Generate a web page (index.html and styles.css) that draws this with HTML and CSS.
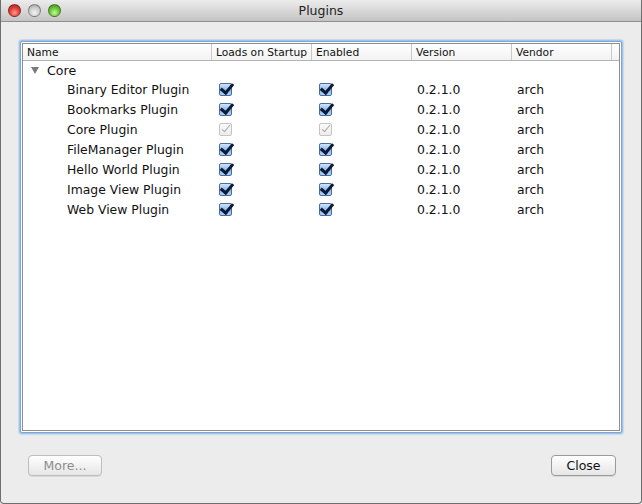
FILE: index.html
```html
<!DOCTYPE html>
<html>
<head>
<meta charset="utf-8">
<link rel="stylesheet" href="styles.css">
</head>
<body>
<div class="window">
  <div class="titlebar">
    <div class="lights">
      <span class="light red"></span>
      <span class="light gray"></span>
      <span class="light green"></span>
    </div>
    <div class="title">Plugins</div>
  </div>
  <div class="content">
    <div class="tableframe">
      <div class="table">
        <div class="header">
          <div class="hcell c-name">Name</div>
          <div class="hcell c-load">Loads on Startup</div>
          <div class="hcell c-en">Enabled</div>
          <div class="hcell c-ver">Version</div>
          <div class="hcell c-ven">Vendor</div>
          <div class="hcell c-rest"></div>
        </div>
        <div class="row group">
          <div class="cell c-name"><span class="tri"></span>Core</div>
        </div>
        <div class="row">
          <div class="cell c-name indent">Binary Editor Plugin</div>
          <div class="cell c-load"><span class="cb on"></span></div>
          <div class="cell c-en"><span class="cb on"></span></div>
          <div class="cell c-ver">0.2.1.0</div>
          <div class="cell c-ven">arch</div>
        </div>
        <div class="row">
          <div class="cell c-name indent">Bookmarks Plugin</div>
          <div class="cell c-load"><span class="cb on"></span></div>
          <div class="cell c-en"><span class="cb on"></span></div>
          <div class="cell c-ver">0.2.1.0</div>
          <div class="cell c-ven">arch</div>
        </div>
        <div class="row">
          <div class="cell c-name indent">Core Plugin</div>
          <div class="cell c-load"><span class="cb dis"></span></div>
          <div class="cell c-en"><span class="cb dis"></span></div>
          <div class="cell c-ver">0.2.1.0</div>
          <div class="cell c-ven">arch</div>
        </div>
        <div class="row">
          <div class="cell c-name indent">FileManager Plugin</div>
          <div class="cell c-load"><span class="cb on"></span></div>
          <div class="cell c-en"><span class="cb on"></span></div>
          <div class="cell c-ver">0.2.1.0</div>
          <div class="cell c-ven">arch</div>
        </div>
        <div class="row">
          <div class="cell c-name indent">Hello World Plugin</div>
          <div class="cell c-load"><span class="cb on"></span></div>
          <div class="cell c-en"><span class="cb on"></span></div>
          <div class="cell c-ver">0.2.1.0</div>
          <div class="cell c-ven">arch</div>
        </div>
        <div class="row">
          <div class="cell c-name indent">Image View Plugin</div>
          <div class="cell c-load"><span class="cb on"></span></div>
          <div class="cell c-en"><span class="cb on"></span></div>
          <div class="cell c-ver">0.2.1.0</div>
          <div class="cell c-ven">arch</div>
        </div>
        <div class="row">
          <div class="cell c-name indent">Web View Plugin</div>
          <div class="cell c-load"><span class="cb on"></span></div>
          <div class="cell c-en"><span class="cb on"></span></div>
          <div class="cell c-ver">0.2.1.0</div>
          <div class="cell c-ven">arch</div>
        </div>
      </div>
    </div>
    <div class="buttons">
      <button class="btn disabled">More...</button>
      <button class="btn close">Close</button>
    </div>
  </div>
</div>
</body>
</html>
```
FILE: styles.css
```css
html, body {
  margin: 0;
  padding: 0;
  background: #ececec;
}
.window {
  width: 642px;
  height: 504px;
  box-sizing: border-box;
  border: 1px solid #6e6e6e;
  border-top: none;
  border-radius: 0 0 4px 4px;
  background: #ececec;
  font-family: "DejaVu Sans", sans-serif;
  display: flex;
  flex-direction: column;
  overflow: hidden;
}
.titlebar {
  height: 22px;
  box-sizing: border-box;
  background: linear-gradient(#ececec, #d8d8d8 50%, #c4c4c4);
  border-bottom: 1px solid #8f8f8f;
  display: flex;
  align-items: center;
  position: relative;
}
.lights {
  display: flex;
  gap: 7px;
  padding-left: 7px;
}
.light {
  width: 13px;
  height: 13px;
  border-radius: 50%;
  box-sizing: border-box;
  border: 1px solid rgba(0,0,0,0.35);
}
.light.red { background: radial-gradient(circle at 50% 70%, #ff9c8f, #e0403a 50%, #a81c16); }
.light.gray { background: radial-gradient(circle at 50% 70%, #f2f2f2, #cfcfcf 50%, #9a9a9a); }
.light.green { background: radial-gradient(circle at 50% 70%, #c8f79a, #6cc338 50%, #3d8a16); }
.title {
  position: absolute;
  left: 0;
  right: 0;
  text-align: center;
  font-size: 12.5px;
  color: #222;
  top: 3px;
}
.content {
  flex: 1;
  display: flex;
  flex-direction: column;
  padding: 19px 19px 0 19px;
}
.tableframe {
  height: 392px;
  box-sizing: border-box;
  border: 1px solid #7ba7d7;
  box-shadow: 0 0 0 1px #a4c2e4, 0 0 1px 2px #c6d9ef;
  border-radius: 2px;
  background: #fff;
  padding: 1px;
}
.table {
  border: 1px solid #8e8e8e;
  height: 100%;
  box-sizing: border-box;
  background: #fff;
}
.header {
  display: flex;
  height: 17px;
  box-sizing: border-box;
  border-bottom: 1px solid #b4b4b4;
  background: linear-gradient(#fff, #f2f2f2);
  font-size: 10.7px;
  color: #111;
}
.hcell {
  box-sizing: border-box;
  padding-left: 4px;
  padding-top: 2px;
  line-height: 14px;
  border-right: 1px solid #c8c8c8;
  white-space: nowrap;
  overflow: hidden;
}
.c-name { width: 189px; }
.c-load { width: 100px; }
.c-en { width: 100px; }
.c-ver { width: 100px; }
.c-ven { width: 100px; }
.c-rest { flex: 1; border-right: none; }
.row {
  display: flex;
  height: 20px;
  align-items: center;
  font-size: 12.4px;
  color: #111;
}
.row.group { height: 18px; font-size: 12.6px; }
.cell {
  box-sizing: border-box;
  padding-left: 5px;
  white-space: nowrap;
  display: flex;
  align-items: center;
}
.cell.indent { padding-left: 44px; }
.tri {
  width: 0;
  height: 0;
  border-left: 4px solid transparent;
  border-right: 4px solid transparent;
  border-top: 7px solid #7a7a7a;
  margin: 0 8px 0 3px;
}
.c-load.cell, .c-en.cell { padding-left: 7px; }
.cb {
  width: 13px;
  height: 13px;
  box-sizing: border-box;
  border: 1px solid #4a6d9c;
  border-radius: 2px;
  background: linear-gradient(#cfe3fb, #8ab8ef 55%, #a9d0fb);
  position: relative;
}
.cb::after {
  content: "";
  position: absolute;
  left: 3px;
  top: -3px;
  width: 5px;
  height: 10px;
  border-right: 3px solid #0d1a33;
  border-bottom: 3px solid #0d1a33;
  transform: rotate(40deg);
}
.cb.dis {
  border-color: #c4c4c4;
  background: linear-gradient(#fafafa, #ececec);
}
.cb.dis::after {
  border-right: 1.5px solid #a8a8a8;
  border-bottom: 1.5px solid #a8a8a8;
  left: 4px;
  top: -1px;
  width: 3px;
  height: 8px;
}
.buttons {
  display: flex;
  justify-content: space-between;
  padding: 22px 6px 0 8px;
}
.btn {
  font-family: "DejaVu Sans", sans-serif;
  font-size: 12.5px;
  height: 21px;
  padding: 0;
  border: 1px solid #9a9a9a;
  border-radius: 4px;
  background: linear-gradient(#ffffff, #f2f2f2 50%, #e6e6e6);
  color: #111;
  box-shadow: 0 1px 0 rgba(0,0,0,0.08);
}
.btn.disabled {
  width: 74px;
  color: #8c8c8c;
  border-color: #bdbdbd;
}
.btn.close {
  width: 65px;
}
```
